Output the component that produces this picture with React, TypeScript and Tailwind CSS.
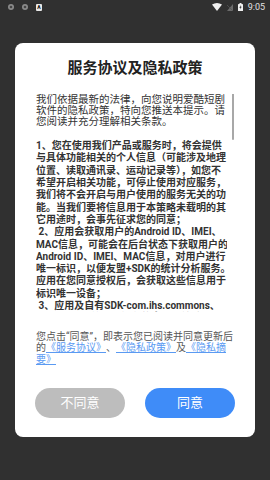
import React from "react";

const FONT = { fontFamily: 'Roboto, "Noto Sans CJK SC", sans-serif' };

const intro = [
  "我们依据最新的法律，向您说明爱酷短剧",
  "软件的隐私政策，特向您推送本提示。请",
  "您阅读并充分理解相关条款。",
];

const bold = [
  "1、您在使用我们产品或服务时，将会提供",
  "与具体功能相关的个人信息（可能涉及地理",
  "位置、读取通讯录、运动记录等），如您不",
  "希望开启相关功能，可停止使用对应服务，",
  "我们将不会开启与用户使用的服务无关的功",
  "能。当我们要将信息用于本策略未载明的其",
  "它用途时，会事先征求您的同意；",
  " 2、应用会获取用户的Android ID、IMEI、",
  "MAC信息，可能会在后台状态下获取用户的",
  "Android ID、IMEI、MAC信息，对用户进行",
  "唯一标识，以便友盟+SDK的统计分析服务。",
  "应用在您同意授权后，会获取这些信息用于",
  "标识唯一设备；",
  " 3、应用及自有SDK-com.ihs.commons、",
  "com.ihs.app等获取设备信息用于统计；",
  " 4、我们会采取业界领先的安全措施保护",
];

function StatusBar() {
  return (
    <div className="h-[14px] flex items-center justify-between pl-[8px] pr-[5px]">
      <div className="flex items-center gap-[8px]">
        <svg width="6" height="6" viewBox="0 0 6 6">
          <circle cx="3" cy="3" r="3" fill="#8a8a8a" />
          <circle cx="3" cy="3" r="1.3" fill="#444" />
        </svg>
        <svg width="6" height="6" viewBox="0 0 6 6">
          <circle cx="3" cy="3" r="3" fill="#8a8a8a" />
          <circle cx="3" cy="3" r="1.3" fill="#444" />
        </svg>
        <div className="w-[6px] h-[7px] bg-[#e8e8e8] rounded-[1px] flex items-center justify-center text-[5px] leading-none text-black font-bold" style={FONT}>
          A
        </div>
      </div>
      <div className="flex items-center gap-[5px]">
        <svg width="10" height="8" viewBox="0 0 10 8">
          <path d="M0 1.5 Q5 -1.5 10 1.5 L5 8 Z" fill="#f0f0f0" />
        </svg>
        <svg width="6" height="7" viewBox="0 0 6 7">
          <path d="M0 7 L6 0 L6 7 Z" fill="#6a6a6a" />
          <path d="M0 1 L6 7" stroke="#555" strokeWidth="0.8" />
        </svg>
        <svg width="5" height="8" viewBox="0 0 5 8">
          <rect x="1.5" y="0" width="2" height="1" fill="#f0f0f0" />
          <rect x="0" y="1" width="5" height="7" rx="0.6" fill="#f0f0f0" />
          <path d="M2.8 2 L1.3 4.8 L2.4 4.8 L2 6.6 L3.7 3.7 L2.6 3.7 Z" fill="#303030" />
        </svg>
        <span className="text-[9px] leading-none text-[#e0e0e0]" style={FONT}>9:05</span>
      </div>
    </div>
  );
}

export default function App() {
  return (
    <div className="w-[270px] h-[480px] bg-[#303030] flex flex-col overflow-hidden" style={FONT}>
      <StatusBar />
      <div className="mt-[29px] mx-[15px] h-[394px] bg-white rounded-[8px] flex flex-col pt-[15px] pb-[19px]">
        <div className="h-[20px] leading-[20px] text-center text-[15px] font-bold text-[#222]">
          服务协议及隐私政策
        </div>
        <div className="mt-[16px] h-[218px] flex pl-[21px] overflow-hidden">
          <div className="w-[191px] h-[218px] overflow-hidden flex flex-col">
            {intro.map((l, i) => (
              <div key={i} className="h-[11px] shrink-0 flex items-center text-[10.5px] leading-[11px] text-[#333] whitespace-pre">
                {l}
              </div>
            ))}
            <div className="h-[13px] shrink-0" />
            {bold.map((l, i) => (
              <div key={i} className="h-[12.3px] shrink-0 flex items-center text-[10px] leading-[12px] text-[#333] font-bold whitespace-pre">
                {l}
              </div>
            ))}
          </div>
          <div className="ml-[5px] w-[2px] h-[47px] -mt-[1px] bg-[#a8a8a8] rounded-full" />
        </div>
        <div className="mt-[19px] pl-[21px] text-[10px] text-[#555] flex flex-col">
          <div className="h-[11.3px] flex items-center leading-[11px] whitespace-pre">您点击“同意”，即表示您已阅读并同意更新后</div>
          <div className="h-[11.3px] flex items-center leading-[11px] whitespace-pre">
            <span>的</span>
            <span className="text-[#5a9af2] underline">《服务协议》</span>
            <span>、</span>
            <span className="text-[#5a9af2] underline">《隐私政策》</span>
            <span>及</span>
            <span className="text-[#5a9af2] underline">《隐私摘</span>
          </div>
          <div className="h-[11px] flex items-center leading-[11px] whitespace-pre">
            <span className="text-[#5a9af2] underline">要》</span>
          </div>
        </div>
        <div className="mt-[23px] flex justify-center gap-[20px]">
          <button className="w-[90px] h-[30px] rounded-full bg-[#bdbdbd] text-white text-[13px]">
            不同意
          </button>
          <button className="w-[90px] h-[30px] rounded-full bg-[#3f8cf8] text-white text-[13px]">
            同意
          </button>
        </div>
      </div>
    </div>
  );
}
